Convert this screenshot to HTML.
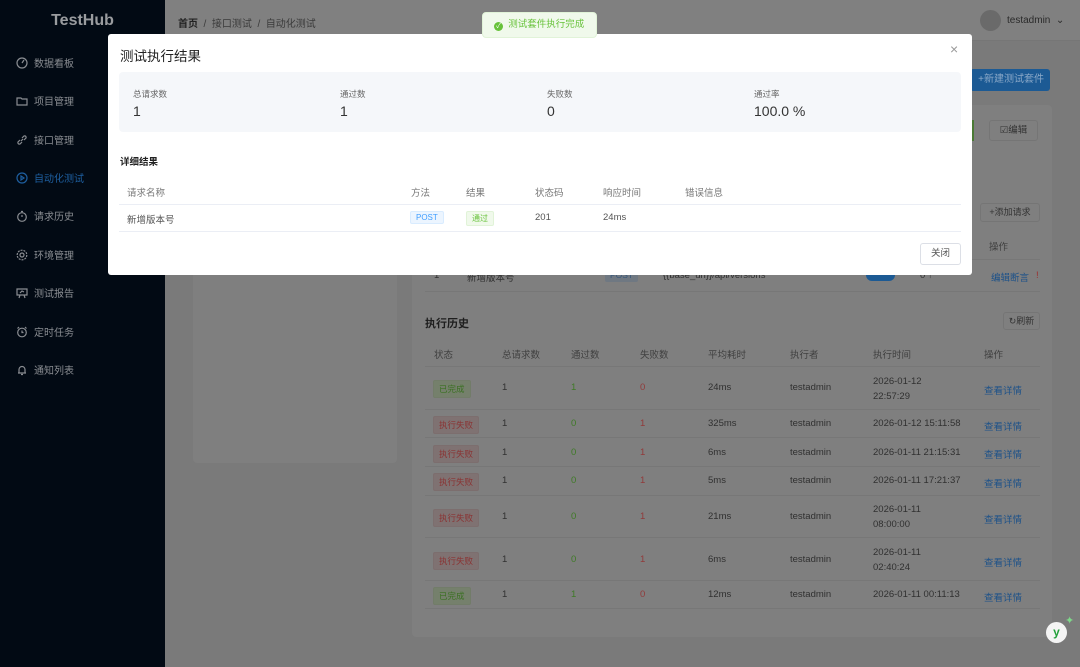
<!DOCTYPE html>
<html><head><meta charset="utf-8"><style>
*{margin:0;padding:0;box-sizing:border-box}
body{width:1080px;height:667px;overflow:hidden;background:#7a7a7a;font-family:"Liberation Sans","Noto Sans CJK SC",sans-serif;position:relative;color:#333}
.abs{position:absolute}
#side{left:0;top:0;width:165px;height:667px;background:#020a14}
.logo{left:0;width:165px;top:12px;text-align:center;color:#9a9c9f;font-size:16px;font-weight:bold}
.mi{left:16px;font-size:10px;color:#8a8d92;display:flex;align-items:center;gap:6px}
.mi svg{width:12px;height:12px;stroke:#8a8d92;fill:none;stroke-width:1.2}
.mi.act{color:#1e5fa0}.mi.act svg{stroke:#1e5fa0}
#hdr{left:165px;top:0;width:915px;height:41px;background:#808080;border-bottom:1px solid #767676}
.bc{left:178px;top:15px;font-size:10px;color:#3a3a3a}
.bc b{color:#222}
.card{background:#7f7f7f;border-radius:4px}
.t{position:absolute;font-size:9.5px;color:#303030;white-space:nowrap}
.h{color:#404040}
.tag{position:absolute;font-size:8.5px;padding:2px 5px;border-radius:2px}
.ok{background:#75806c;color:#3a7022;border:1px solid #727c69}
.bad{background:#7f7272;color:#8a3333;border:1px solid #7c6e6e}
.ln{position:absolute;height:1px;background:#777}
.lk{color:#1c5189}
#modal{left:108px;top:34px;width:864px;height:241px;background:#fff;border-radius:3px}
.m{position:absolute;white-space:nowrap}
</style></head><body>
<div id="side" class="abs">
<div class="abs logo">TestHub</div>
<div class="abs mi" style="top:55px"><svg viewBox="0 0 12 12"><circle cx="6" cy="6" r="5"/><path d="M6 6l2-3"/></svg>数据看板</div>
<div class="abs mi" style="top:93px"><svg viewBox="0 0 12 12"><path d="M1 3h4l1 1h5v6H1z"/></svg>项目管理</div>
<div class="abs mi" style="top:132px"><svg viewBox="0 0 12 12"><path d="M5 7l2-2M4 6l-2 2a1.5 1.5 0 0 0 2 2l2-2M8 6l2-2a1.5 1.5 0 0 0-2-2L6 4"/></svg>接口管理</div>
<div class="abs mi act" style="top:170px"><svg viewBox="0 0 12 12"><circle cx="6" cy="6" r="5"/><path d="M5 4v4l3-2z"/></svg>自动化测试</div>
<div class="abs mi" style="top:208px"><svg viewBox="0 0 12 12"><circle cx="6" cy="7" r="4.3"/><path d="M6 7V5M5 1.5h2"/></svg>请求历史</div>
<div class="abs mi" style="top:247px"><svg viewBox="0 0 12 12"><circle cx="6" cy="6" r="2"/><circle cx="6" cy="6" r="4.8" stroke-dasharray="2 1"/></svg>环境管理</div>
<div class="abs mi" style="top:285px"><svg viewBox="0 0 12 12"><path d="M1 2h10v6H1zM4 8l-1 3M8 8l1 3M4 6l2-2 2 1"/></svg>测试报告</div>
<div class="abs mi" style="top:324px"><svg viewBox="0 0 12 12"><circle cx="6" cy="6.5" r="4.3"/><path d="M6 4.5v2h1.5M1.5 2.5l1.5-1.5M10.5 2.5L9 1"/></svg>定时任务</div>
<div class="abs mi" style="top:362px"><svg viewBox="0 0 12 12"><path d="M3 9V5.5a3 3 0 0 1 6 0V9zM2 9h8M5 10.5h2"/></svg>通知列表</div>
</div>
<div id="hdr" class="abs"></div>
<div class="abs bc"><b>首页</b> &nbsp;/&nbsp; 接口测试 &nbsp;/&nbsp; 自动化测试</div>
<div class="abs" style="left:980px;top:10px;width:21px;height:21px;border-radius:50%;background:#6a6a6a"></div>
<div class="abs" style="left:1007px;top:15px;font-size:10px;color:#2a2a2a">testadmin &nbsp;⌄</div>
<div class="abs" style="left:970px;top:69px;width:80px;height:22px;background:#1c5a94;border-radius:3px;color:#8aa8c8;font-size:10px;line-height:22px;text-align:right;padding-right:6px">+新建测试套件</div>
<div class="abs card" style="left:193px;top:105px;width:204px;height:358px"></div>
<div class="abs card" style="left:412px;top:105px;width:640px;height:532px"></div>
<div class="abs" style="left:960px;top:120px;width:14px;height:21px;background:#4a7a35"></div>
<div class="abs" style="left:989px;top:120px;width:49px;height:21px;border:1px solid #757575;border-radius:3px;font-size:9.5px;line-height:19px;text-align:center;color:#333">☑编辑</div>
<div class="abs" style="left:980px;top:203px;width:60px;height:19px;border:1px solid #757575;border-radius:3px;font-size:9px;line-height:17px;text-align:center;color:#333">+添加请求</div>
<div class="t h" style="left:989px;top:239px">操作</div>
<div class="ln" style="left:425px;top:259px;width:615px"></div>
<div class="t" style="left:434px;top:270px">1</div>
<div class="t" style="left:467px;top:270px">新增版本号</div>
<div class="tag" style="left:605px;top:268px;background:#6f7882;color:#38577a">POST</div>
<div class="t" style="left:663px;top:270px">{{base_url}}/api/versions</div>
<div class="abs" style="left:866px;top:269px;width:29px;height:12px;border-radius:7px;background:#1c5a94"></div>
<div class="t" style="left:920px;top:270px">0 ↑</div>
<div class="t lk" style="left:991px;top:270px">编辑断言</div>
<div class="t" style="left:1036px;top:270px;color:#9b2f2f">!</div>
<div class="ln" style="left:425px;top:291px;width:615px"></div>
<div class="t" style="left:425px;top:315px;font-size:11px;font-weight:bold;color:#1e1e1e">执行历史</div>
<div class="abs" style="left:1003px;top:312px;width:37px;height:18px;border:1px solid #757575;border-radius:3px;font-size:9px;line-height:16px;text-align:center;color:#333">↻刷新</div>
<div class="t h" style="left:434px;top:347px">状态</div><div class="t h" style="left:502px;top:347px">总请求数</div><div class="t h" style="left:571px;top:347px">通过数</div><div class="t h" style="left:640px;top:347px">失败数</div><div class="t h" style="left:708px;top:347px">平均耗时</div><div class="t h" style="left:790px;top:347px">执行者</div><div class="t h" style="left:873px;top:347px">执行时间</div><div class="t h" style="left:984px;top:347px">操作</div>
<div class="ln" style="left:425px;top:366px;width:615px"></div>
<div class="tag ok" style="left:433px;top:380px">已完成</div><div class="t" style="left:502px;top:382px">1</div><div class="t" style="left:571px;top:382px;color:#3e7a26">1</div><div class="t" style="left:640px;top:382px;color:#913a3a">0</div><div class="t" style="left:708px;top:382px">24ms</div><div class="t" style="left:790px;top:382px">testadmin</div><div class="t" style="left:873px;top:374px;line-height:15px">2026-01-12<br>22:57:29</div><div class="t lk" style="left:984px;top:383px">查看详情</div>
<div class="ln" style="left:425px;top:409px;width:615px"></div>
<div class="tag bad" style="left:433px;top:416px">执行失败</div><div class="t" style="left:502px;top:418px">1</div><div class="t" style="left:571px;top:418px;color:#3e7a26">0</div><div class="t" style="left:640px;top:418px;color:#913a3a">1</div><div class="t" style="left:708px;top:418px">325ms</div><div class="t" style="left:790px;top:418px">testadmin</div><div class="t" style="left:873px;top:418px">2026-01-12 15:11:58</div><div class="t lk" style="left:984px;top:419px">查看详情</div>
<div class="ln" style="left:425px;top:437px;width:615px"></div>
<div class="tag bad" style="left:433px;top:445px">执行失败</div><div class="t" style="left:502px;top:447px">1</div><div class="t" style="left:571px;top:447px;color:#3e7a26">0</div><div class="t" style="left:640px;top:447px;color:#913a3a">1</div><div class="t" style="left:708px;top:447px">6ms</div><div class="t" style="left:790px;top:447px">testadmin</div><div class="t" style="left:873px;top:447px">2026-01-11 21:15:31</div><div class="t lk" style="left:984px;top:447px">查看详情</div>
<div class="ln" style="left:425px;top:466px;width:615px"></div>
<div class="tag bad" style="left:433px;top:473px">执行失败</div><div class="t" style="left:502px;top:475px">1</div><div class="t" style="left:571px;top:475px;color:#3e7a26">0</div><div class="t" style="left:640px;top:475px;color:#913a3a">1</div><div class="t" style="left:708px;top:475px">5ms</div><div class="t" style="left:790px;top:475px">testadmin</div><div class="t" style="left:873px;top:475px">2026-01-11 17:21:37</div><div class="t lk" style="left:984px;top:476px">查看详情</div>
<div class="ln" style="left:425px;top:495px;width:615px"></div>
<div class="tag bad" style="left:433px;top:509px">执行失败</div><div class="t" style="left:502px;top:511px">1</div><div class="t" style="left:571px;top:511px;color:#3e7a26">0</div><div class="t" style="left:640px;top:511px;color:#913a3a">1</div><div class="t" style="left:708px;top:511px">21ms</div><div class="t" style="left:790px;top:511px">testadmin</div><div class="t" style="left:873px;top:502px;line-height:15px">2026-01-11<br>08:00:00</div><div class="t lk" style="left:984px;top:512px">查看详情</div>
<div class="ln" style="left:425px;top:537px;width:615px"></div>
<div class="tag bad" style="left:433px;top:552px">执行失败</div><div class="t" style="left:502px;top:554px">1</div><div class="t" style="left:571px;top:554px;color:#3e7a26">0</div><div class="t" style="left:640px;top:554px;color:#913a3a">1</div><div class="t" style="left:708px;top:554px">6ms</div><div class="t" style="left:790px;top:554px">testadmin</div><div class="t" style="left:873px;top:545px;line-height:15px">2026-01-11<br>02:40:24</div><div class="t lk" style="left:984px;top:555px">查看详情</div>
<div class="ln" style="left:425px;top:580px;width:615px"></div>
<div class="tag ok" style="left:433px;top:587px">已完成</div><div class="t" style="left:502px;top:589px">1</div><div class="t" style="left:571px;top:589px;color:#3e7a26">1</div><div class="t" style="left:640px;top:589px;color:#913a3a">0</div><div class="t" style="left:708px;top:589px">12ms</div><div class="t" style="left:790px;top:589px">testadmin</div><div class="t" style="left:873px;top:589px">2026-01-11 00:11:13</div><div class="t lk" style="left:984px;top:590px">查看详情</div>
<div class="ln" style="left:425px;top:608px;width:615px"></div>
<div class="abs" style="left:1046px;top:622px;width:21px;height:21px;border-radius:50%;background:#f4f4f4;color:#22a03a;font-weight:bold;font-size:12px;text-align:center;line-height:21px">y</div>
<div class="abs" style="left:1065px;top:614px;color:#7fd88a;font-size:11px">✦</div>
<div id="modal" class="abs">
<div class="m" style="left:12px;top:11px;font-size:13.5px;color:#222">测试执行结果</div>
<div class="m" style="left:842px;top:7px;font-size:14px;color:#999">×</div>
<div class="m" style="left:11px;top:38px;width:842px;height:60px;background:#f5f7fa;border-radius:4px"></div>
<div class="m" style="left:25px;top:54px;font-size:8.5px;color:#666">总请求数</div><div class="m" style="left:25px;top:69px;font-size:14px;color:#333">1</div>
<div class="m" style="left:232px;top:54px;font-size:8.5px;color:#666">通过数</div><div class="m" style="left:232px;top:69px;font-size:14px;color:#333">1</div>
<div class="m" style="left:439px;top:54px;font-size:8.5px;color:#666">失败数</div><div class="m" style="left:439px;top:69px;font-size:14px;color:#333">0</div>
<div class="m" style="left:646px;top:54px;font-size:8.5px;color:#666">通过率</div><div class="m" style="left:646px;top:69px;font-size:14px;color:#333">100.0 %</div>
<div class="m" style="left:12px;top:120px;font-size:9.5px;font-weight:bold;color:#222">详细结果</div>
<div class="m" style="left:19px;top:151px;font-size:9.5px;color:#777">请求名称</div>
<div class="m" style="left:303px;top:151px;font-size:9.5px;color:#777">方法</div>
<div class="m" style="left:358px;top:151px;font-size:9.5px;color:#777">结果</div>
<div class="m" style="left:427px;top:151px;font-size:9.5px;color:#777">状态码</div>
<div class="m" style="left:495px;top:151px;font-size:9.5px;color:#777">响应时间</div>
<div class="m" style="left:577px;top:151px;font-size:9.5px;color:#777">错误信息</div>
<div class="m" style="left:11px;top:170px;width:842px;height:1px;background:#ebeef5"></div>
<div class="m" style="left:19px;top:178px;font-size:9.5px;color:#555">新增版本号</div>
<div class="m" style="left:302px;top:177px;font-size:8px;color:#409eff;background:#ecf5ff;border:1px solid #d9ecff;padding:1px 5px;border-radius:2px">POST</div>
<div class="m" style="left:358px;top:177px;font-size:8px;color:#67c23a;background:#f0f9eb;border:1px solid #e1f3d8;padding:1px 5px;border-radius:2px">通过</div>
<div class="m" style="left:427px;top:178px;font-size:9.5px;color:#555">201</div>
<div class="m" style="left:495px;top:178px;font-size:9.5px;color:#555">24ms</div>
<div class="m" style="left:11px;top:197px;width:842px;height:1px;background:#ebeef5"></div>
<div class="m" style="left:812px;top:209px;width:41px;height:22px;border:1px solid #dcdfe6;border-radius:3px;font-size:9.5px;line-height:20px;text-align:center;color:#555">关闭</div>
</div>
<div class="abs" style="left:482px;top:12px;width:115px;height:26px;background:#f0f9eb;border:1px solid #e1f3d8;border-radius:4px;color:#67c23a;font-size:9.5px;line-height:24px;padding-left:11px"><span style="display:inline-block;width:9px;height:9px;border-radius:50%;background:#67c23a;color:#fff;font-size:7px;line-height:9px;text-align:center;vertical-align:-1px">✓</span>&nbsp; 测试套件执行完成</div>
</body></html>
